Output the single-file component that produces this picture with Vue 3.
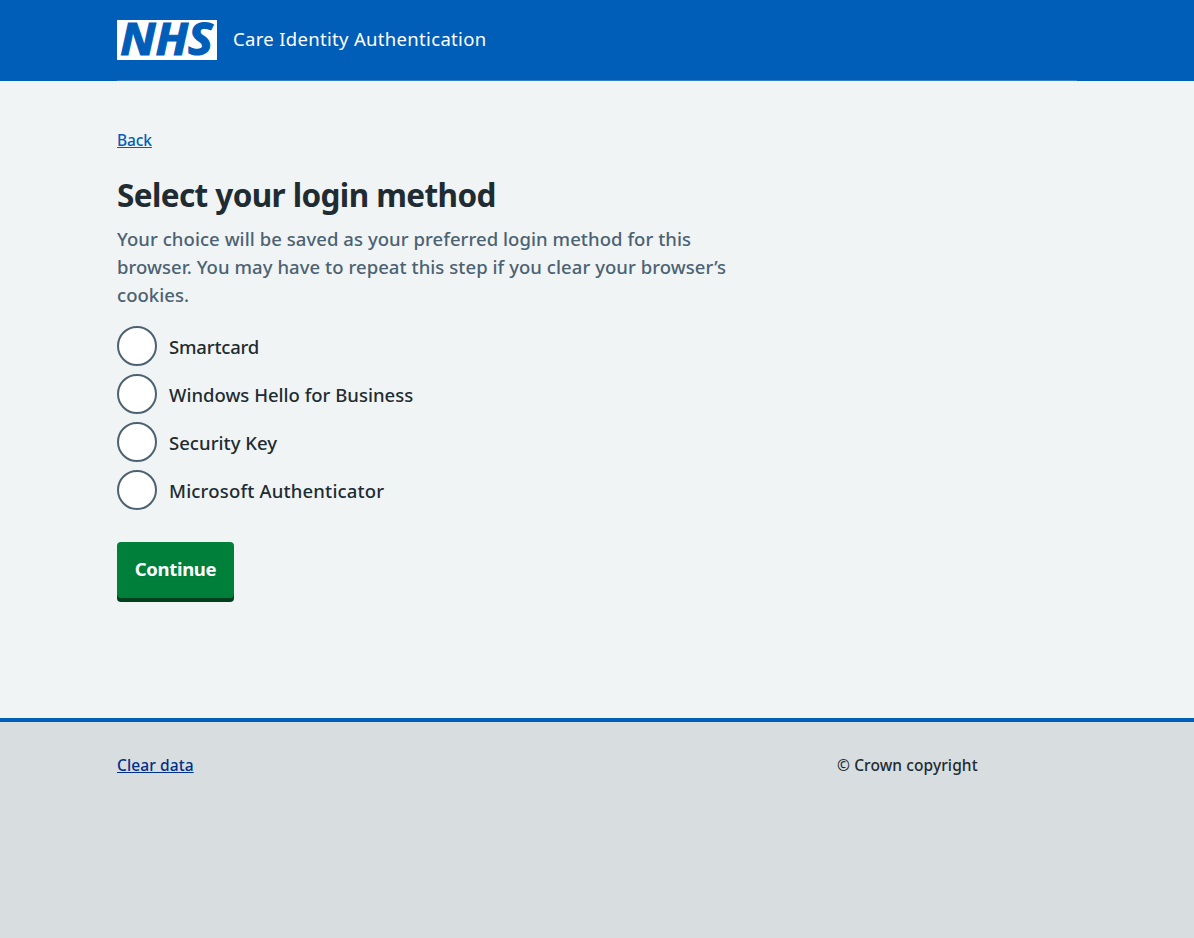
<script setup>
import { ref } from 'vue'

const methods = [
  { id: 'smartcard', label: 'Smartcard' },
  { id: 'windows', label: 'Windows Hello for Business' },
  { id: 'key', label: 'Security Key' },
  { id: 'authenticator', label: 'Microsoft Authenticator' },
]
const selected = ref('')
</script>

<template>
  <div class="page">
    <header class="header">
      <div class="container header-inner">
        <svg class="logo" viewBox="0 0 100 40" role="img" aria-label="NHS">
          <rect width="100" height="40" fill="#fff" />
          <text class="logo-text" x="3.2" y="35.4" textLength="92.5" lengthAdjust="spacingAndGlyphs">NHS</text>
        </svg>
        <span class="service">Care Identity Authentication</span>
      </div>
    </header>

    <div class="container content">
      <a class="back" href="#">Back</a>
      <main>
        <h1 class="title">Select your login method</h1>
        <p class="hint">Your choice will be saved as your preferred login method for this browser. You may have to repeat this step if you clear your browser’s cookies.</p>
        <div class="radios">
          <label v-for="m in methods" :key="m.id" class="radio">
            <input v-model="selected" class="radio-input" type="radio" name="method" :value="m.id" />
            <span class="radio-label" :class="m.id">{{ m.label }}</span>
          </label>
        </div>
        <button class="continue" type="button">Continue</button>
      </main>
    </div>

    <footer class="footer">
      <div class="container footer-inner">
        <a class="clear" href="#">Clear data</a>
        <span class="copyright">© Crown copyright</span>
      </div>
    </footer>
  </div>
</template>

<style>
body {
  margin: 0;
  background: #f0f4f5;
}
</style>

<style scoped>
.page {
  display: flex;
  flex-direction: column;
  height: 938px;
  overflow: hidden;
  color: #212b32;
  font-family: "Noto Sans", "Open Sans", sans-serif;
  font-size: 18.5px;
  font-weight: 500;
  line-height: 28px;
}
.container {
  box-sizing: border-box;
  width: 960px;
  margin: 0 117px;
}
.header {
  flex: none;
  height: 81px;
  background: #005eb8;
}
.header-inner {
  display: flex;
  align-items: center;
  height: 81px;
  border-bottom: 1px solid #337ec6;
}
.logo {
  display: block;
  width: 100px;
  height: 40px;
  overflow: visible;
}
.logo-text {
  font-family: "Noto Sans", sans-serif;
  font-size: 44px;
  font-style: italic;
  font-weight: 700;
  fill: #005eb8;
  stroke: #005eb8;
  stroke-width: 1.2px;
}
.service {
  margin-left: 16px;
  padding-bottom: 2px;
  color: #fff;
  font-weight: 400;
  letter-spacing: 0.32px;
}
.content {
  flex: none;
  height: 637px;
  padding-top: 47px;
}
.back {
  display: block;
  width: fit-content;
  color: #005eb8;
  font-size: 15.5px;
  line-height: 24px;
  letter-spacing: -0.1px;
}
.title {
  margin: 21px 0 0;
  font-size: 31.5px;
  font-weight: 700;
  line-height: 44px;
  letter-spacing: -0.6px;
}
.hint {
  width: 624px;
  margin: 8px 0 0;
  color: #4c6272;
  letter-spacing: 0.06px;
}
.radios {
  display: grid;
  gap: 8px;
  margin-top: 17px;
}
.radio {
  display: flex;
  align-items: center;
  width: fit-content;
  height: 40px;
}
.radio-input {
  appearance: none;
  box-sizing: border-box;
  width: 40px;
  height: 40px;
  margin: 0;
  border: 2px solid #4c6272;
  border-radius: 50%;
  background: #fff;
}
.radio-label {
  padding: 2px 0 0 12px;
}
.smartcard {
  letter-spacing: -0.18px;
}
.windows {
  letter-spacing: 0;
}
.key {
  letter-spacing: 0.04px;
}
.authenticator {
  letter-spacing: 0.18px;
}
.continue {
  display: block;
  width: 117px;
  height: 56px;
  margin: 32px 0 0;
  padding: 0 0 2px;
  border: 0;
  border-radius: 4px;
  background: #007f3b;
  box-shadow: 0 4px 0 #00401e;
  color: #fff;
  font: 700 18.5px/28px "Noto Sans", sans-serif;
  letter-spacing: -0.33px;
}
.footer {
  flex: 1;
  border-top: 4px solid #005eb8;
  background: #d8dde0;
}
.footer-inner {
  display: grid;
  grid-template-columns: 720px 1fr;
  padding-top: 31px;
  font-size: 15.5px;
  line-height: 24px;
  letter-spacing: 0.1px;
}
.clear {
  justify-self: start;
  color: #003087;
}
</style>
